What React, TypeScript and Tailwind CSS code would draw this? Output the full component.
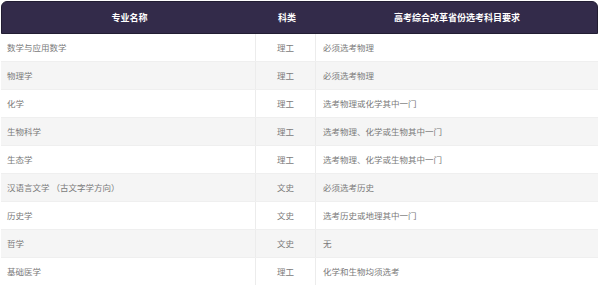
const ROWS = [
  { name: "数学与应用数学", type: "理工", req: "必须选考物理" },
  { name: "物理学", type: "理工", req: "必须选考物理" },
  { name: "化学", type: "理工", req: "选考物理或化学其中一门" },
  { name: "生物科学", type: "理工", req: "选考物理、化学或生物其中一门" },
  { name: "生态学", type: "理工", req: "选考物理、化学或生物其中一门" },
  { name: "汉语言文学 （古文字学方向）", type: "文史", req: "必须选考历史" },
  { name: "历史学", type: "文史", req: "选考历史或地理其中一门" },
  { name: "哲学", type: "文史", req: "无" },
  { name: "基础医学", type: "理工", req: "化学和生物均须选考" },
];

export default function App() {
  return (
    <div className="w-[600px] h-[285px] overflow-hidden bg-white font-['Noto_Sans_CJK_SC',sans-serif]">
      <div className="ml-px mt-px w-[597px]">
        {/* header */}
        <div className="grid grid-cols-[255px_60px_1fr] h-[33px] items-center rounded-t-[6px] bg-[#332b4a] border border-[#221d33] text-white text-[9px] font-bold">
          <div className="text-center">专业名称</div>
          <div className="text-center">科类</div>
          <div className="text-center">高考综合改革省份选考科目要求</div>
        </div>

        {/* rows */}
        {ROWS.map((r, i) => (
          <div
            key={r.name}
            className={`grid grid-cols-[255px_60px_1fr] h-[28px] items-center border-b border-[#efefef] text-[8.5px] text-[#7a7a7a] ${
              i % 2 === 1 ? "bg-[#f5f5f5]" : "bg-white"
            }`}
          >
            <div className="h-full flex items-center pl-[6px] border-r border-[#ececec] whitespace-pre">{r.name}</div>
            <div className="h-full flex items-center justify-center border-r border-[#ececec]">{r.type}</div>
            <div className="pl-[7px]">{r.req}</div>
          </div>
        ))}
      </div>
    </div>
  );
}
